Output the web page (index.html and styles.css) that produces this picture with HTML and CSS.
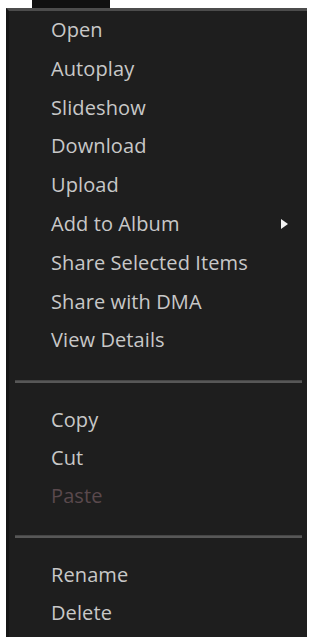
FILE: index.html
```html
<!DOCTYPE html>
<html>
<head>
<meta charset="utf-8">
<link rel="stylesheet" href="styles.css">
</head>
<body>
<div class="topstrip"><div class="topblock"></div></div>
<div class="menu">
  <div class="group">
    <div class="item">Open</div>
    <div class="item">Autoplay</div>
    <div class="item">Slideshow</div>
    <div class="item">Download</div>
    <div class="item">Upload</div>
    <div class="item sub"><span>Add to Album</span><svg class="arrow" width="7" height="10" viewBox="0 0 7 10"><path d="M0 0 L7 5 L0 10 Z" fill="#f2f2f2"/></svg></div>
    <div class="item">Share Selected Items</div>
    <div class="item">Share with DMA</div>
    <div class="item">View Details</div>
  </div>
  <div class="sep"></div>
  <div class="group compact">
    <div class="item">Copy</div>
    <div class="item">Cut</div>
    <div class="item disabled">Paste</div>
  </div>
  <div class="sep"></div>
  <div class="group compact">
    <div class="item">Rename</div>
    <div class="item">Delete</div>
  </div>
</div>
</body>
</html>
```
FILE: styles.css
```css
html, body {
  margin: 0;
  padding: 0;
  background: #ffffff;
  height: 637px;
  overflow: hidden;
}
body {
  display: flex;
  flex-direction: column;
  font-family: "Open Sans", "Noto Sans", sans-serif;
}
.topstrip {
  height: 8px;
  display: flex;
}
.topblock {
  margin-left: 32px;
  width: 78px;
  height: 8px;
  background: #101010;
}
.menu {
  flex: 1;
  margin: 0 2px 0 6px;
  background: #1e1e1e;
  border-top: 3px solid #4c4c4c;
  border-left: 3px solid #161616;
  display: flex;
  flex-direction: column;
}
.group {
  display: flex;
  flex-direction: column;
}
.item {
  height: 38.8px;
  line-height: 38.8px;
  padding-left: 42px;
  padding-right: 19px;
  font-size: 20px;
  letter-spacing: 0.1px;
  color: #c8c8c8;
  display: flex;
  align-items: center;
  justify-content: space-between;
  white-space: nowrap;
}
.compact .item {
  height: 38px;
  line-height: 38px;
}
.item.disabled {
  color: #5a494d;
}
.arrow {
  display: block;
}
.sep {
  height: 3px;
  margin: 20px 5px 18px 6px;
  background: #575757;
  border-top: 1px solid #464646;
  box-sizing: border-box;
}
```
